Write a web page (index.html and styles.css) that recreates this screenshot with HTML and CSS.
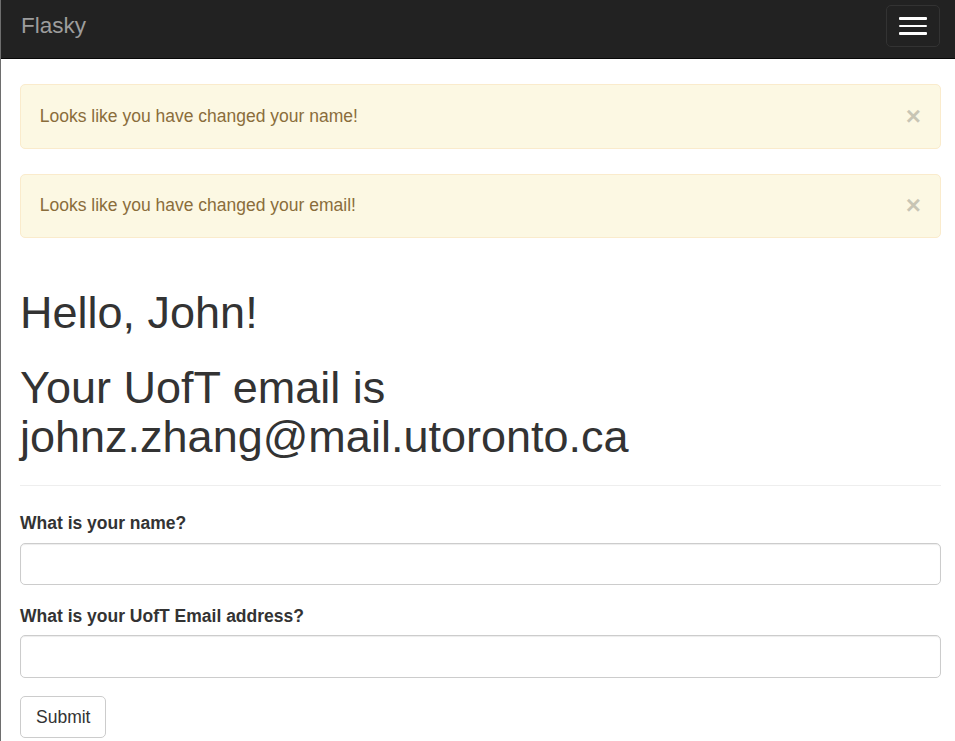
FILE: index.html
```html
<!DOCTYPE html>
<html lang="en">
<head>
<meta charset="utf-8">
<title>Flasky</title>
<link rel="stylesheet" href="styles.css">
</head>
<body>
<nav class="navbar">
  <a class="brand" href="#">Flasky</a>
  <button class="toggle" type="button" aria-label="Toggle navigation">
    <span class="bar"></span>
    <span class="bar"></span>
    <span class="bar"></span>
  </button>
</nav>
<main class="container">
  <div class="alert">
    <span class="alert-text">Looks like you have changed your name!</span>
    <button class="close" type="button">&times;</button>
  </div>
  <div class="alert">
    <span class="alert-text">Looks like you have changed your email!</span>
    <button class="close" type="button">&times;</button>
  </div>
  <div class="page-header">
    <h1 class="title">Hello, John!</h1>
    <h1 class="title">Your UofT email is johnz.zhang@mail.utoronto.ca</h1>
  </div>
  <form class="form">
    <div class="form-group">
      <label class="label" for="name">What is your name?</label>
      <input class="input" id="name" type="text">
    </div>
    <div class="form-group">
      <label class="label" for="email">What is your UofT Email address?</label>
      <input class="input" id="email" type="text">
    </div>
    <button class="btn" type="submit">Submit</button>
  </form>
</main>
</body>
</html>
```
FILE: styles.css
```css
* { box-sizing: border-box; }
html, body { margin: 0; padding: 0; }
body {
  font-family: "Liberation Sans", Arial, sans-serif;
  font-size: 17.5px;
  line-height: 25px;
  color: #333;
  background: #fff;
  border-left: 1px solid #6e6e6e;
  min-height: 741px;
}
.navbar {
  display: flex;
  justify-content: space-between;
  align-items: flex-start;
  height: 59px;
  background: #222;
  border-bottom: 1px solid #080808;
  margin-bottom: 25px;
}
.brand {
  display: block;
  padding: 13px 19px 0 20px;
  font-size: 22.5px;
  line-height: 25px;
  color: #9d9d9d;
  text-decoration: none;
}
.toggle {
  margin: 5px 15px 0 0;
  width: 54px;
  height: 42px;
  padding: 11px 12.5px;
  background: transparent;
  border: 1px solid #333;
  border-radius: 5px;
  display: flex;
  flex-direction: column;
  gap: 5px;
  align-items: center;
}
.bar {
  display: block;
  width: 27.5px;
  height: 2.5px;
  background: #fff;
  border-radius: 1px;
}
.container {
  padding: 0 14px 0 19px;
}
.alert {
  display: flex;
  justify-content: space-between;
  align-items: flex-start;
  padding: 18.75px 19px 18.75px 18.75px;
  margin-bottom: 25px;
  background: #fcf8e3;
  border: 1px solid #faebcc;
  border-radius: 5px;
  color: #8a6d3b;
}
.close {
  font-family: "Liberation Sans", Arial, sans-serif;
  font-size: 26px;
  font-weight: bold;
  line-height: 25px;
  color: #000;
  opacity: .2;
  text-shadow: 0 1px 0 #fff;
  background: transparent;
  border: 0;
  padding: 0;
  cursor: pointer;
}
.page-header {
  padding-bottom: 11.25px;
  margin: 50px 0 25px;
  border-bottom: 1px solid #eee;
}
.title {
  font-size: 45px;
  font-weight: 500;
  line-height: 49.5px;
  margin: 25px 0 12.5px;
}
.form { margin: 0; }
.form-group { margin-bottom: 18.75px; }
.label {
  display: inline-block;
  font-weight: bold;
  margin-bottom: 6.25px;
}
.input {
  display: block;
  width: 100%;
  height: 42.5px;
  padding: 7.5px 15px;
  font: inherit;
  color: #555;
  background: #fff;
  border: 1px solid #ccc;
  border-radius: 5px;
  box-shadow: inset 0 1px 1px rgba(0,0,0,.075);
}
.btn {
  display: inline-block;
  padding: 7.5px 15px;
  font: inherit;
  color: #333;
  background: #fff;
  border: 1px solid #ccc;
  border-radius: 5px;
  cursor: pointer;
}
```
